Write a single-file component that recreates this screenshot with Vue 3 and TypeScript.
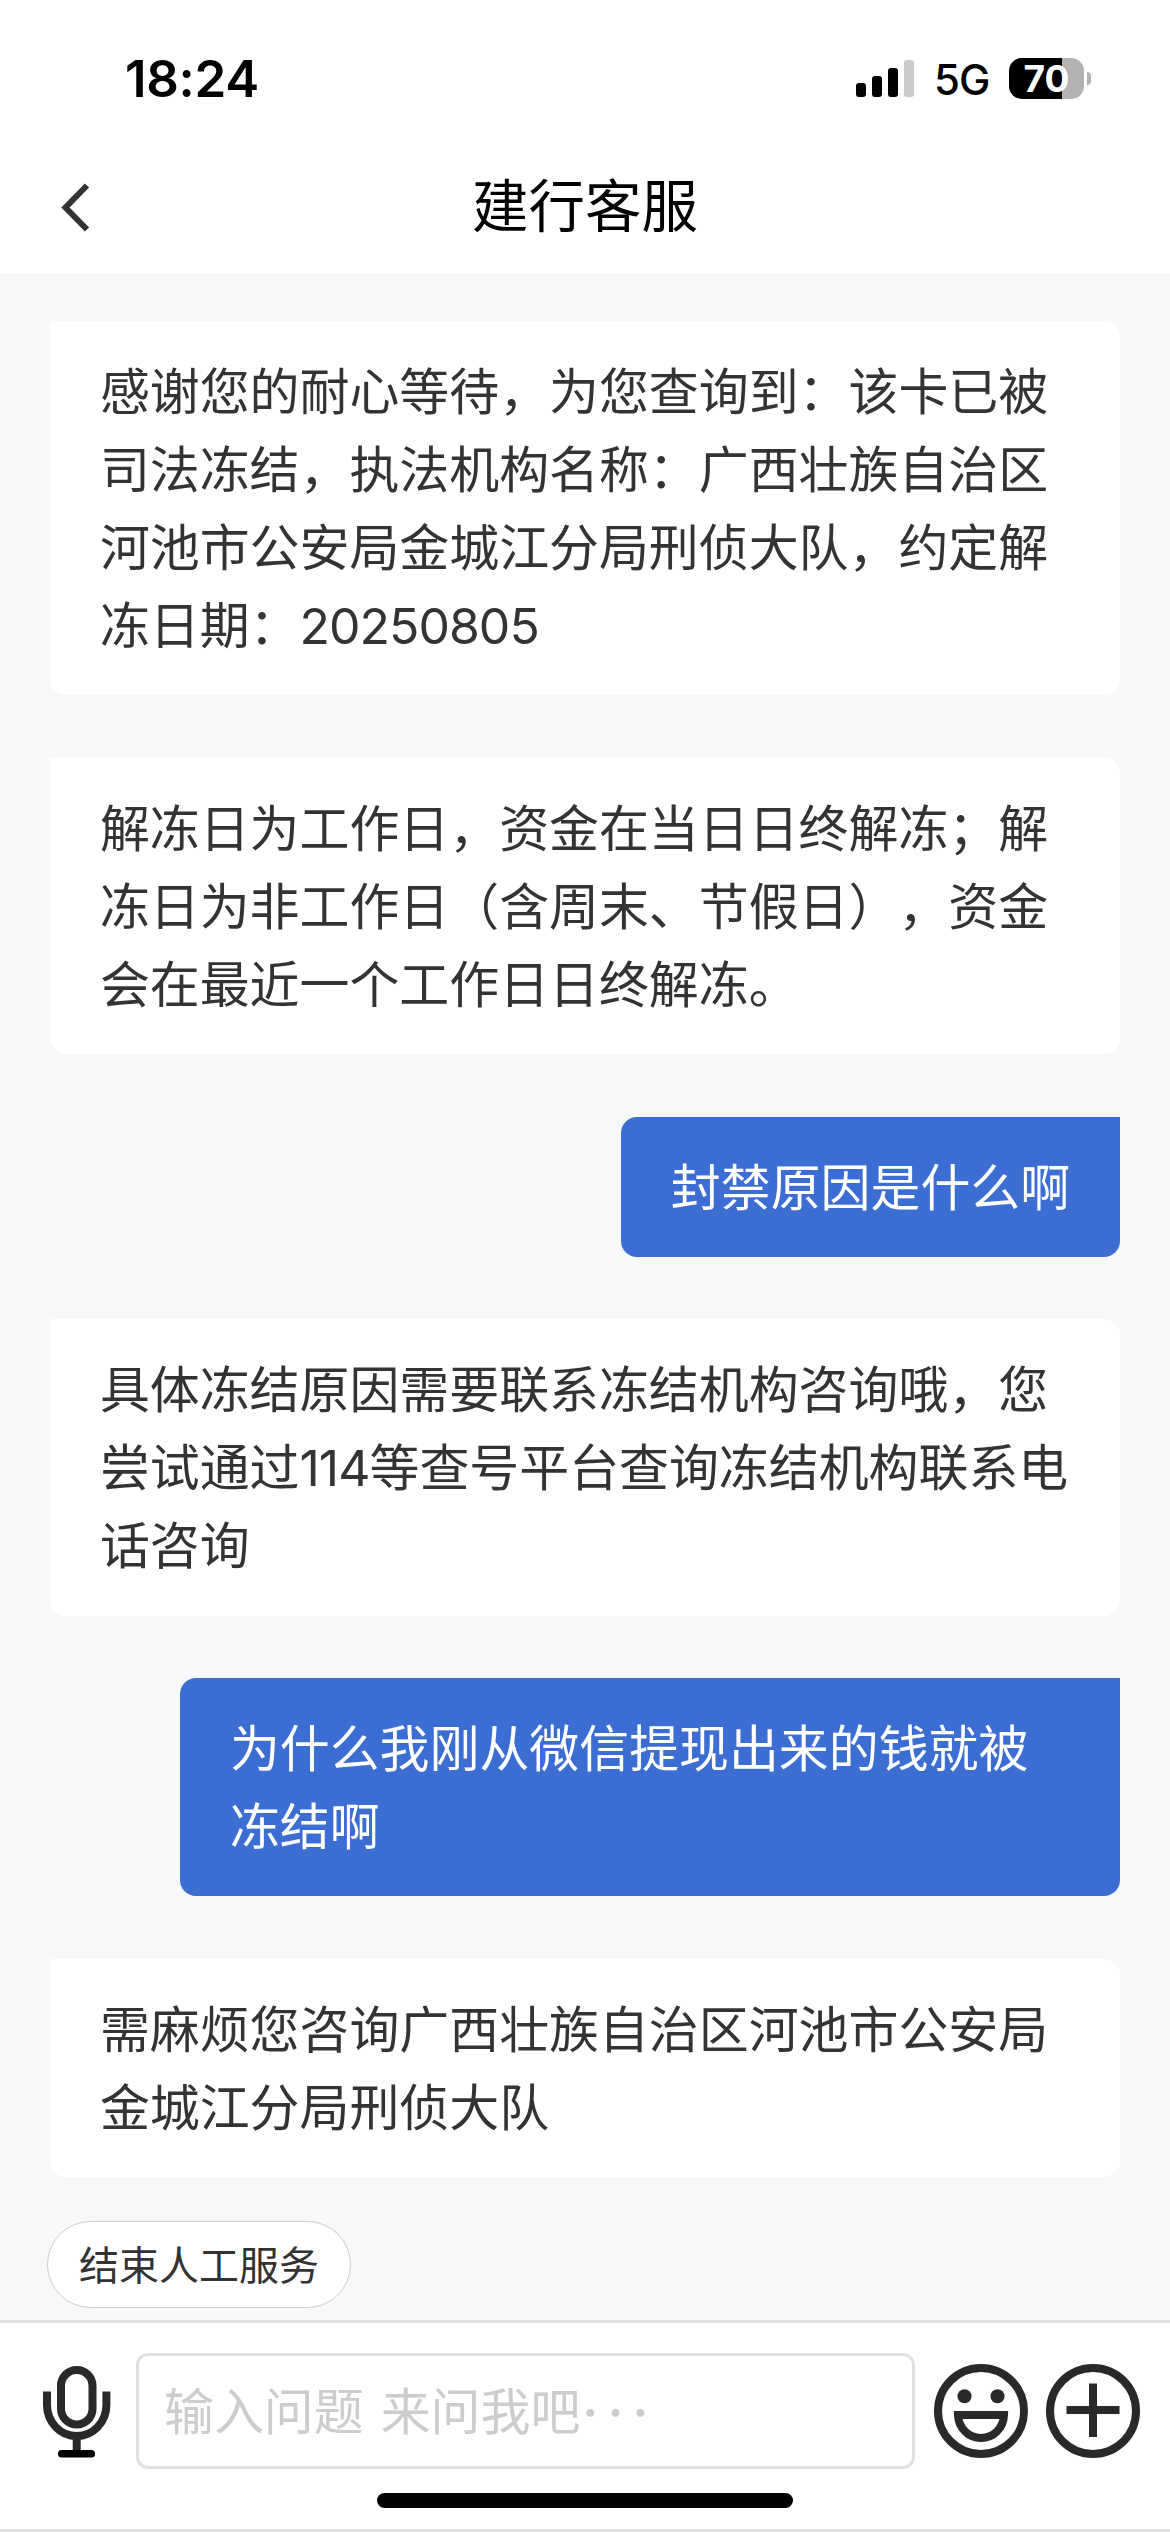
<script setup lang="ts">
interface Message {
  id: number
  from: 'agent' | 'user'
  lines: string[]
}

interface Segment {
  text: string
  digits: boolean
}

const messages: Message[] = [
  {
    id: 1,
    from: 'agent',
    lines: [
      '感谢您的耐心等待，为您查询到：该卡已被',
      '司法冻结，执法机构名称：广西壮族自治区',
      '河池市公安局金城江分局刑侦大队，约定解',
      '冻日期：20250805',
    ],
  },
  {
    id: 2,
    from: 'agent',
    lines: [
      '解冻日为工作日，资金在当日日终解冻；解',
      '冻日为非工作日（含周末、节假日），资金',
      '会在最近一个工作日日终解冻。',
    ],
  },
  { id: 3, from: 'user', lines: ['封禁原因是什么啊'] },
  {
    id: 4,
    from: 'agent',
    lines: [
      '具体冻结原因需要联系冻结机构咨询哦，您',
      '尝试通过114等查号平台查询冻结机构联系电',
      '话咨询',
    ],
  },
  { id: 5, from: 'user', lines: ['为什么我刚从微信提现出来的钱就被', '冻结啊'] },
  {
    id: 6,
    from: 'agent',
    lines: ['需麻烦您咨询广西壮族自治区河池市公安局', '金城江分局刑侦大队'],
  },
]

// Numbers are set slightly tighter than the surrounding text.
function segments(text: string): Segment[] {
  return text
    .split(/(\d+)/)
    .filter((t) => t !== '')
    .map((t) => ({ text: t, digits: /^\d+$/.test(t) }))
}

const signalBars = [14, 21, 29, 37]
</script>

<template>
  <div class="screen">
    <header class="header">
      <div class="status">
        <span class="time">18:24</span>
        <div class="status-right">
          <div class="signal">
            <i
              v-for="(h, i) in signalBars"
              :key="h"
              class="bar"
              :class="{ off: i === 3 }"
              :style="{ height: h + 'px' }"
            ></i>
          </div>
          <span class="network">5G</span>
          <div class="battery"><span>70</span></div>
          <i class="battery-tip"></i>
        </div>
      </div>
      <div class="nav">
        <svg class="back" width="30" height="50" viewBox="0 0 30 50">
          <path d="M27 3.500 5.500 25.500 27 47.500" fill="none" stroke="#333" stroke-width="6" />
        </svg>
        <h1>建行客服</h1>
      </div>
    </header>

    <main class="chat">
      <div v-for="m in messages" :key="m.id" class="bubble" :class="m.from">
        <div v-for="line in m.lines" :key="line" class="line"><span
          v-for="(s, i) in segments(line)"
          :key="i"
          :class="{ digits: s.digits }"
        >{{ s.text }}</span></div>
      </div>
      <button class="pill">结束人工服务</button>
    </main>

    <footer class="footer">
      <div class="composer">
        <svg class="mic" width="68" height="94" viewBox="0 0 68 94">
          <g fill="none" stroke="#27292b" stroke-width="8">
            <rect x="18" y="6" width="31.5" height="54.5" rx="15.75" />
            <path d="M4 27.500V41a29.700 31 0 0 0 59.400 0V27.500" />
            <path d="M33.700 72V88" />
          </g>
          <rect x="15" y="86" width="37" height="7.500" rx="3.500" fill="#000" />
        </svg>
        <div class="input">输入问题 来问我吧<span class="dots">···</span></div>
        <svg class="smile" width="94" height="94" viewBox="0 0 94 94">
          <circle cx="47" cy="47" r="43" fill="none" stroke="#27292b" stroke-width="8" />
          <circle cx="30.500" cy="32.300" r="7" fill="#27292b" />
          <circle cx="63.500" cy="32.300" r="7" fill="#27292b" />
          <path
            d="M24 51H70C69.500 64 59.500 74 47 74S24.500 64 24 51Z"
            fill="none"
            stroke="#27292b"
            stroke-width="8"
          />
        </svg>
        <svg class="plus" width="94" height="94" viewBox="0 0 94 94">
          <g fill="none" stroke="#27292b" stroke-width="8">
            <circle cx="47" cy="47" r="43" />
            <path d="M47 19.500V73M20.500 46H73.500" />
          </g>
        </svg>
      </div>
      <div class="home"></div>
    </footer>
  </div>
</template>

<style>
body {
  margin: 0;
  background: #fff;
}
</style>

<style scoped>
.screen {
  width: 1170px;
  height: 2532px;
  display: flex;
  flex-direction: column;
  overflow: hidden;
  background: #f7f8fa;
  font-family: Inter, 'Noto Sans CJK SC', sans-serif;
  color: #333;
}
.header {
  height: 273px;
  flex: none;
  background: #fff;
}
.status {
  height: 156px;
  box-sizing: border-box;
  padding: 0 79px 0 125px;
  display: flex;
  justify-content: space-between;
  align-items: center;
  color: #000;
}
.time {
  font-size: 51px;
  font-weight: 600;
  letter-spacing: -0.3px;
}
.status-right {
  display: flex;
  align-items: center;
}
.signal {
  display: flex;
  align-items: flex-end;
  gap: 6px;
  height: 37px;
}
.bar {
  width: 10px;
  border-radius: 3px;
  background: #000;
}
.bar.off {
  background: #ccc;
}
.network {
  width: 55px;
  margin: 4px 20px 0;
  font-size: 42px;
  font-weight: 500;
  line-height: 50px;
  letter-spacing: -1px;
  white-space: nowrap;
}
.battery {
  width: 75px;
  height: 41px;
  border-radius: 13px;
  background: linear-gradient(to right, #000 53px, #b2b2b2 53px);
  color: #fff;
  font-size: 37px;
  font-weight: 700;
  line-height: 42px;
  text-align: center;
}
.battery-tip {
  width: 4px;
  height: 13px;
  margin-left: 3px;
  border-radius: 0 4px 4px 0;
  background: #b2b2b2;
}
.nav {
  height: 101px;
  display: flex;
  align-items: center;
  padding: 0 60px;
}
.back {
  flex: none;
}
h1 {
  flex: 1;
  margin: 0 30px 0 0;
  text-align: center;
  font-size: 56.5px;
  font-weight: 400;
  line-height: 80px;
  color: #000;
}
.chat {
  flex: 1;
  min-height: 0;
  box-sizing: border-box;
  padding: 48px 50px 0;
  display: flex;
  flex-direction: column;
  align-items: flex-start;
}
.bubble {
  box-sizing: border-box;
  padding: 32.2px 49.9px 30.2px;
  margin-bottom: 62.4px;
  font-size: 49.92px;
  line-height: 78px;
  text-spacing-trim: space-all;
}
.line {
  height: 78px;
  white-space: nowrap;
}
.digits {
  letter-spacing: -0.95px;
}
.agent {
  width: 1070px;
  background: #fff;
  border-radius: 0 16px 16px 16px;
}
.user {
  align-self: flex-end;
  background: #3c6dd2;
  color: #fff;
  border-radius: 16px 0 16px 16px;
}
.user:has(.line + .line) {
  width: 940px;
}
.pill {
  box-sizing: border-box;
  width: 304px;
  height: 87px;
  flex: none;
  margin: -19px 0 0 -3px;
  padding: 2px 0 0;
  border: 1px solid #ccc;
  border-radius: 44px;
  background: #fff;
  color: #333;
  font-family: inherit;
  font-size: 40px;
  line-height: 83px;
  text-align: center;
}
.footer {
  flex: none;
  height: 212px;
  box-sizing: border-box;
  border-top: 3px solid #e2dfdf;
  border-bottom: 3px solid #e2dfdf;
  background: #fff;
}
.composer {
  display: flex;
  align-items: center;
  padding: 30px 30px 0 43px;
}
.composer svg {
  flex: none;
}
.input {
  flex: none;
  width: 779px;
  height: 116px;
  box-sizing: border-box;
  margin-left: 25px;
  padding: 1px 0 0 25px;
  border: 3px solid #e2dfdf;
  border-radius: 12px;
  color: #ccc;
  font-size: 49.92px;
  line-height: 110px;
  white-space: pre;
  word-spacing: 3px;
}
.dots {
  margin-left: 2px;
  font-weight: 600;
  letter-spacing: 9.2px;
}
.smile {
  margin-left: 19px;
}
.plus {
  margin-left: 18px;
}
.home {
  width: 416px;
  height: 15px;
  margin: 24px auto 0;
  border-radius: 8px;
  background: #000;
}
</style>
